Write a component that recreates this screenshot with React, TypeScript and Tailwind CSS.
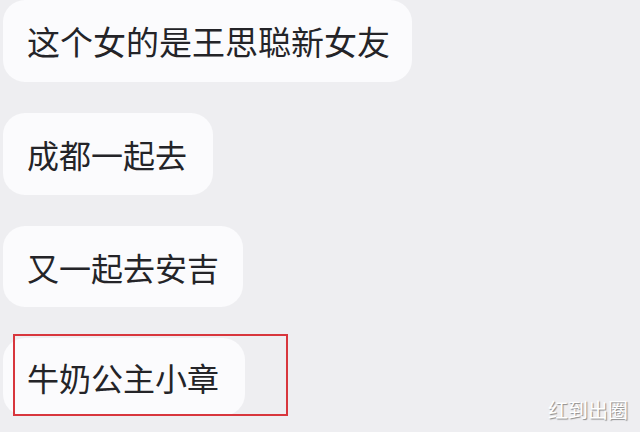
import React from 'react';

const messages = [
  { text: '这个女的是王思聪新女友', size: 'text-[33px] pr-[22px]', h: 'h-[82px]' },
  { text: '成都一起去', size: 'text-[32px] pr-[26px]', h: 'h-[82px]' },
  { text: '又一起去安吉', size: 'text-[32px] pr-[24px]', h: 'h-[81px]' },
];

export default function App() {
  return (
    <div
      className="relative w-[640px] h-[432px] overflow-hidden bg-[#eeeef1]"
      style={{ fontFamily: '"Noto Sans CJK SC", "Noto Sans", sans-serif' }}
    >
      <div className="flex flex-col items-start gap-[31px] pl-[3px]">
        {messages.map((m) => (
          <div
            key={m.text}
            className={`flex items-center ${m.h} rounded-[22px] bg-[#fbfbfd] pl-[24px] text-[#242428] leading-none ${m.size}`}
          >
            {m.text}
          </div>
        ))}

        {/* highlighted message */}
        <div className="relative">
          <div className="flex items-center h-[78px] rounded-[22px] bg-[#fbfbfd] pl-[24px] pr-[26px] text-[32px] text-[#242428] leading-none">
            牛奶公主小章
          </div>
          <div className="absolute left-[10px] top-[-4px] w-[275px] h-[82px] border-2 border-[#d8363d]" />
        </div>
      </div>

      {/* watermark */}
      <div
        className="absolute right-[12px] bottom-[12px] text-[20px] leading-none text-white"
        style={{ textShadow: '1px 1px 1px #8a8a8a' }}
      >
        红到出圈
      </div>
    </div>
  );
}
